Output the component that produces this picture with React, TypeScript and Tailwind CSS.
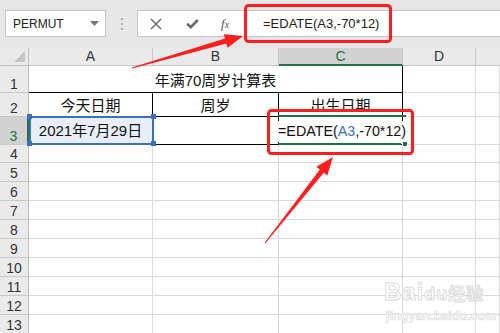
import React from "react";

const F = "font-['Liberation_Sans','Noto_Sans_CJK_SC',sans-serif]";

function RowHead({ n, active }: { n: number; active?: boolean }) {
  return (
    <div
      className={
        "flex items-end justify-center pb-[1px] text-[14px] leading-none border-b border-[#c8c8c8] " +
        (active
          ? "bg-[#d2d2d2] text-[#217346] border-r-2 border-r-[#217346]"
          : "bg-[#eaeaea] text-[#333] border-r border-r-[#bdbdbd]")
      }
    >
      {n}
    </div>
  );
}

function Cell({ className = "" }: { className?: string }) {
  return <div className={"border-r border-b border-[#d9d9d9] " + className} />;
}

export default function App() {
  const rows = [4, 5, 6, 7, 8, 9, 10, 11, 12, 13];
  return (
    <div className={"relative w-[500px] h-[333px] overflow-hidden bg-white " + F}>
      {/* top bar */}
      <div className="h-[48px] bg-[#e7e7e7] flex items-start pt-[10px] pl-[5px]">
        <div className="w-[101px] h-[27px] bg-white border border-[#c6c6c6] flex items-center pl-[7px] pr-[6px]">
          <span className="text-[12px] text-[#222] flex-1">PERMUT</span>
          <svg width="9" height="5" viewBox="0 0 9 5">
            <path d="M0 0 L9 0 L4.5 5 Z" fill="#777" />
          </svg>
        </div>
        <div className="w-[31px] h-[27px] flex flex-col items-center justify-center gap-[3px]">
          <div className="w-[2px] h-[2px] bg-[#a8a8a8]" />
          <div className="w-[2px] h-[2px] bg-[#a8a8a8]" />
          <div className="w-[2px] h-[2px] bg-[#a8a8a8]" />
        </div>
        <div className="flex-1 h-[27px] bg-white border border-[#c6c6c6] border-r-0 flex items-center">
          <div className="w-[108px] flex items-center">
            <svg className="ml-[12px]" width="12" height="12" viewBox="0 0 12 12">
              <path d="M1 1 L11 11 M11 1 L1 11" stroke="#6b6b6b" strokeWidth="1.5" />
            </svg>
            <svg className="ml-[24px]" width="13" height="11" viewBox="0 0 13 11">
              <path d="M1.2 5.8 L4.8 9.2 L11.8 2" stroke="#6b6b6b" strokeWidth="2.6" fill="none" />
            </svg>
            <span className="ml-[22px] text-[13px] italic text-[#555] font-['Liberation_Serif',serif]">
              f<span className="text-[10px]">x</span>
            </span>
          </div>
          <span className="ml-[17px] text-[13px] text-[#222]">=EDATE(A3,-70*12)</span>
        </div>
      </div>

      {/* sheet */}
      <div className="grid grid-cols-[29px_124px_126px_124px_73px_24px] grid-rows-[18px_27px_24px_28px_18px_repeat(9,19px)]">
        {/* header row */}
        <div className="relative bg-[#eaeaea] border-r border-b border-[#bdbdbd]">
          <svg className="absolute right-[3px] bottom-[3px]" width="11" height="11" viewBox="0 0 11 11">
            <path d="M11 0 L11 11 L0 11 Z" fill="#c4c4c4" />
          </svg>
        </div>
        <div className="bg-[#eaeaea] border-r border-b border-[#c8c8c8] flex items-center justify-center text-[14px] text-[#333]">A</div>
        <div className="bg-[#eaeaea] border-r border-b border-[#c8c8c8] flex items-center justify-center text-[14px] text-[#333]">B</div>
        <div className="bg-[#d2d2d2] border-r border-r-[#c8c8c8] border-b-2 border-b-[#217346] flex items-center justify-center text-[14px] text-[#217346]">C</div>
        <div className="bg-[#eaeaea] border-r border-b border-[#c8c8c8] flex items-center justify-center text-[14px] text-[#333]">D</div>
        <div className="bg-[#eaeaea] border-b border-[#c8c8c8]" />

        {/* row 1 */}
        <RowHead n={1} />
        <div className="col-span-3 border-b border-b-black border-r border-r-black flex items-end justify-center pb-[4px] leading-none text-[15px] text-[#111]">
          年满70周岁计算表
        </div>
        <Cell />
        <Cell />

        {/* row 2 */}
        <RowHead n={2} />
        <div className="border-b border-b-black border-r border-r-black flex items-end justify-center pb-[3px] leading-none text-[15px] text-[#111]">今天日期</div>
        <div className="border-b border-b-black border-r border-r-black flex items-end justify-center pb-[3px] leading-none text-[15px] text-[#111]">周岁</div>
        <div className="border-b border-b-black border-r border-r-black flex items-end justify-center pb-[3px] leading-none text-[15px] text-[#111]">出生日期</div>
        <Cell />
        <Cell />

        {/* row 3 */}
        <RowHead n={3} active />
        <div className="relative bg-[#e8eef8] border-b border-b-black border-r border-r-black flex items-center justify-center pt-[2px] text-[15px] text-[#111]">
          <div className="absolute top-[-1px] left-0 w-[125px] h-[29px] border-2 border-[#3d6fc0]" />
          <div className="absolute top-[-3px] left-[-2px] w-[5px] h-[5px] bg-[#3d6fc0]" />
          <div className="absolute top-[-3px] left-[122px] w-[5px] h-[5px] bg-[#3d6fc0]" />
          <div className="absolute top-[24px] left-[-2px] w-[5px] h-[5px] bg-[#3d6fc0]" />
          <div className="absolute top-[24px] left-[122px] w-[5px] h-[5px] bg-[#3d6fc0]" />
          <span className="relative">2021年7月29日</span>
        </div>
        <div className="border-b border-b-black border-r border-r-black" />
        <div className="relative z-10 border-b border-b-black border-r border-r-black flex items-center pt-[2px] text-[14.3px] text-[#111] whitespace-nowrap">
          <div className="absolute top-[-5px] left-0 w-[123px] h-[3px] bg-white" />
          <div className="absolute top-[-2px] left-[-1px] w-[128px] h-[2px] bg-[#217346]" />
          <div className="absolute top-[26px] left-[-1px] w-[123px] h-[2px] bg-[#217346]" />
          <div className="absolute top-[24px] left-[123px] w-[6px] h-[6px] bg-[#217346] border border-white" />
          <span className="relative ml-[-1px] bg-white">
            =EDATE(<span className="text-[#3d6fc0]">A3</span>,-70*12)
          </span>
        </div>
        <Cell />
        <Cell />

        {rows.map((r) => (
          <React.Fragment key={r}>
            <RowHead n={r} />
            <Cell />
            <Cell />
            <Cell />
            <Cell />
            <Cell />
          </React.Fragment>
        ))}
      </div>

      {/* watermark */}
      <div className="absolute left-[384px] top-[280px] flex flex-col items-start pointer-events-none">
        <span className="text-[24px] font-bold leading-none text-white [-webkit-text-stroke:1px_#dcdcdc] tracking-[1px]">
          Bai<span className="text-[18px]">du</span>
          <span className="text-[17px] font-['Noto_Sans_CJK_SC',sans-serif]">经验</span>
        </span>
        <span className="mt-[6px] ml-[2px] text-[12px] font-bold leading-none text-white tracking-[0.3px] [-webkit-text-stroke:0.7px_#dcdcdc]">
          jingyan.baidu.com
        </span>
      </div>

      {/* annotations */}
      <svg className="absolute left-0 top-0 pointer-events-none" width="500" height="333" viewBox="0 0 500 333">
        <rect x="245.5" y="5.5" width="145" height="36" rx="3" fill="none" stroke="#ff1e1e" strokeWidth="3" />
        <rect x="268.5" y="110.5" width="144" height="43" rx="3" fill="none" stroke="#ff1e1e" strokeWidth="3" />
        <polygon
          points="131.86,67.52 225.0,38.6 223.8,34.3 243,36 227.6,47.7 226.4,43.4 132.14,68.48"
          fill="#ff1e1e"
        />
        <polygon
          points="264.61,242.69 319.84,169.55 316.3,166.8 333,157 327.3,175.4 323.76,172.65 265.39,243.31"
          fill="#ff1e1e"
        />
      </svg>
    </div>
  );
}
